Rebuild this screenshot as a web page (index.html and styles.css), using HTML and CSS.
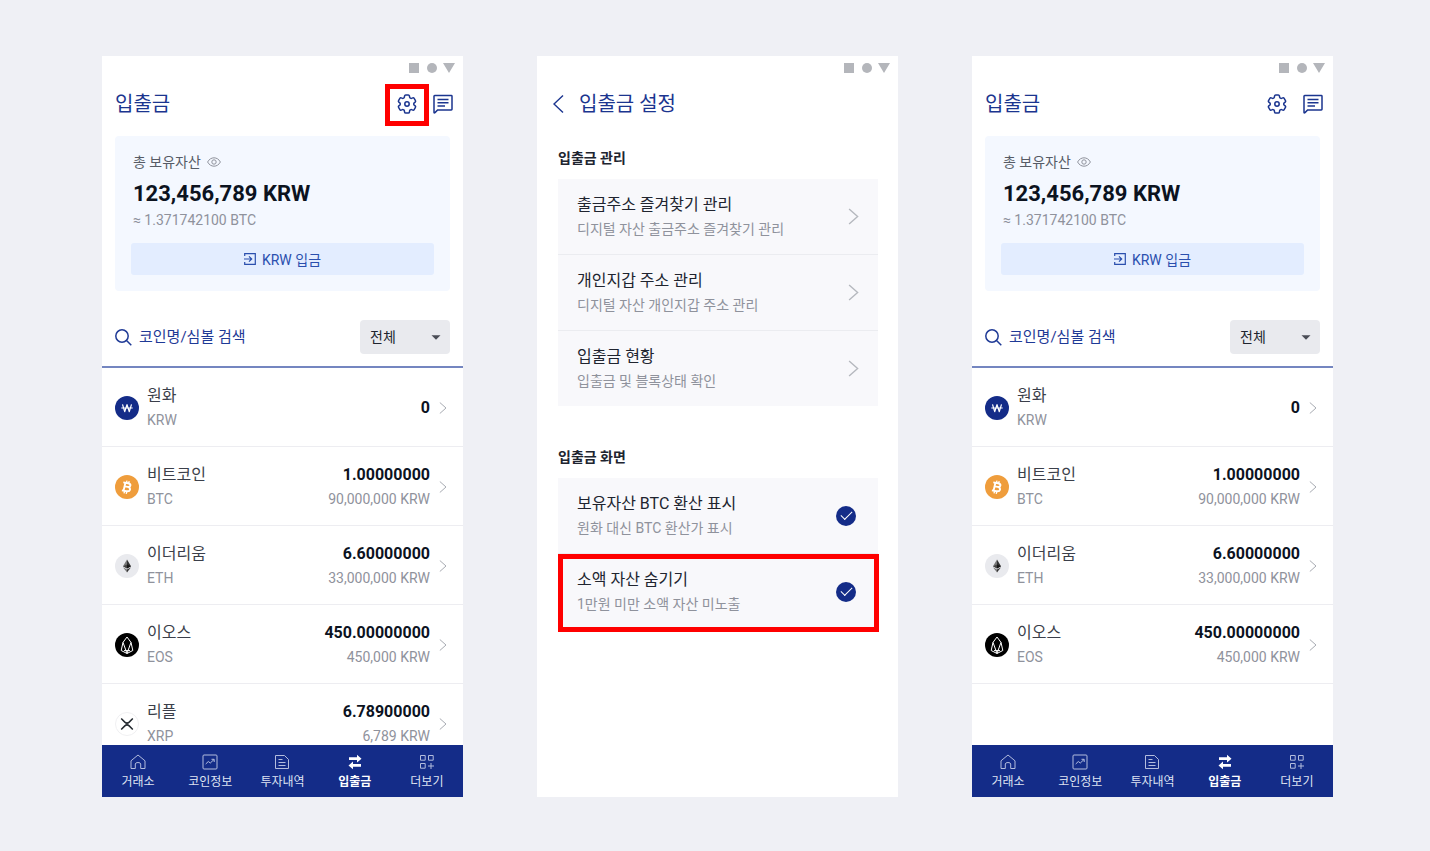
FILE: index.html
```html
<!DOCTYPE html>
<html lang="ko">
<head>
<meta charset="utf-8">
<meta name="viewport" content="width=device-width, initial-scale=1">
<title>입출금</title>
<link rel="stylesheet" href="styles.css">
</head>
<body>
<svg class="sprite" aria-hidden="true">
  <symbol id="status" viewBox="0 0 46 10"><path d="M0 0h10v10H0zM34 0h12l-6 10z"/><circle cx="23" cy="5" r="5"/></symbol>
  <symbol id="gear" viewBox="2 2 20 20"><path d="M9.594 3.94c.09-.542.56-.94 1.11-.94h2.593c.55 0 1.02.398 1.11.94l.213 1.281c.063.374.313.686.645.87.074.04.147.083.22.127.325.196.72.257 1.075.124l1.217-.456a1.125 1.125 0 0 1 1.37.49l1.296 2.247a1.125 1.125 0 0 1-.26 1.431l-1.003.827c-.293.241-.438.613-.43.992a7.723 7.723 0 0 1 0 .255c-.008.378.137.75.43.991l1.004.827c.424.35.534.955.26 1.43l-1.298 2.247a1.125 1.125 0 0 1-1.369.491l-1.217-.456c-.355-.133-.75-.072-1.076.124a6.47 6.47 0 0 1-.22.128c-.331.183-.581.495-.644.869l-.213 1.281c-.09.543-.56.94-1.11.94h-2.594c-.55 0-1.019-.398-1.11-.94l-.213-1.281c-.062-.374-.312-.686-.644-.87a6.52 6.52 0 0 1-.22-.127c-.325-.196-.72-.257-1.076-.124l-1.217.456a1.125 1.125 0 0 1-1.369-.49l-1.297-2.247a1.125 1.125 0 0 1 .26-1.431l1.004-.827c.292-.24.437-.613.43-.991a6.932 6.932 0 0 1 0-.255c.007-.38-.138-.751-.43-.992l-1.004-.827a1.125 1.125 0 0 1-.26-1.43l1.297-2.247a1.125 1.125 0 0 1 1.37-.491l1.216.456c.356.133.751.072 1.076-.124.072-.044.146-.086.22-.128.332-.183.582-.495.644-.869l.214-1.28Z"/><circle cx="12" cy="12" r="2.2"/></symbol>
  <symbol id="chat" viewBox="0 0 20 20"><path d="M1 18.5V2.2Q1 1.5 1.7 1.5h16.6q.7 0 .7.7v13q0 .7-.7.7H4.6L2 18.6q-1 .7-1-.1z"/><path d="M4.5 5.5h11M4.5 8.7h11M4.5 11.9h7.5"/></symbol>
  <symbol id="eye" viewBox="0 0 14 10"><path d="M.6 5C3.500-.6 10.500-.6 13.400 5 10.500 10.600 3.500 10.600.6 5z"/><circle cx="7" cy="5" r="2.200"/></symbol>
  <symbol id="deposit" viewBox="0 0 12 12"><path d="M.7 3V.7h10.600v10.600H.7V9M0 6h7.500M5 3.300 7.700 6 5 8.700"/></symbol>
  <symbol id="search" viewBox="0 0 17 17"><circle cx="7" cy="7" r="6.200"/><path d="m11.500 11.500 4.800 4.800"/></symbol>
  <symbol id="caret" viewBox="0 0 10 5"><path d="M.5.300h9L5 4.800z"/></symbol>
  <symbol id="next" viewBox="0 0 8 12"><path d="m.8.5 6.200 5.500L.8 11.500"/></symbol>
  <symbol id="back" viewBox="0 0 11 18"><path d="M10 .6 1 9l9 8.400"/></symbol>
  <symbol id="krw" viewBox="0 0 24 24"><circle cx="12" cy="12" r="12" fill="#142c88"/><path fill="none" stroke="#fff" stroke-width="1.200" stroke-linejoin="round" d="m7.500 8.300 2.200 7.400L12 8.600l2.300 7.100 2.200-7.400M6.300 12h11.400"/></symbol>
  <symbol id="btc" viewBox="0 0 24 24"><circle cx="12" cy="12" r="12" fill="#ef9d3c"/><g fill="none" stroke="#fff" stroke-width="1.900" stroke-linejoin="round"><path d="m10.400 7.800-1.900 8.100M8.300 7.400l4.800.8c3.600.8 2.700 4.200-.5 3.700l-2.700-.5M12.600 11.900c4 .9 2.800 5-1.100 4.300l-4.600-.8"/><path stroke-width="1.300" d="m11.400 8 .6-2.400M13.600 8.500l.6-2.400M9 18.400l.6-2.300M11.200 18.900l.6-2.400"/></g></symbol>
  <symbol id="eth" viewBox="0 0 24 24"><circle cx="12" cy="12" r="12" fill="#e9eaee"/><path d="M12 5.500 8 12.200l4 2.300z" fill="#777"/><path d="m12 5.500 4 6.700-4 2.300z" fill="#333"/><path d="m8 12.200 4-1.800v4.100z" fill="#444"/><path d="m16 12.200-4-1.800v4.100z" fill="#161616"/><path d="m8 13.200 4 5.400v-3z" fill="#777"/><path d="m16 13.200-4 5.400v-3z" fill="#333"/></symbol>
  <symbol id="eos" viewBox="0 0 24 24"><circle cx="12" cy="12" r="12"/><path fill="none" stroke="#fff" stroke-linejoin="round" d="M12 4 8 9.400 6.200 17.500 12 20.500l5.800-3L16 9.400zM8 9.400l4 11 4-11M9 17.600h6"/></symbol>
  <symbol id="xrp" viewBox="0 0 24 24"><circle cx="12" cy="12" r="11.500" fill="#fff" stroke="#f0f0f2"/><path fill="none" stroke="#23292f" stroke-width="1.500" d="m6.200 6.500 3.600 3.600q2.200 2 4.400 0l3.600-3.600M6.200 17.500l3.600-3.600q2.200-2 4.400 0l3.600 3.600"/></symbol>
  <symbol id="home" viewBox="0 0 16 16"><path d="M1 6.800 8 1l7 5.800v7.700h-4.300V10Q10.500 8.500 8 8.500T5.300 10v4.500H1z"/></symbol>
  <symbol id="chart" viewBox="0 0 16 16"><rect x="1" y="1" width="14" height="14" rx="1"/><path d="m3.700 10 2.600-2.500 2 1.500 3.700-3.500M9.500 5.300h2.700V8"/></symbol>
  <symbol id="doc" viewBox="0 0 16 16"><path d="M1.500 1.500h9l4 4v9h-13zM4.500 5.500h4M4.500 8.500h7M4.500 11.500h7"/></symbol>
  <symbol id="swap" viewBox="0 0 16 16"><path d="M2 3.200h8V.8L14.500 4.700 10 8.600V6.100H2zM14 10H6V7.600L1.500 11.500 6 15.200v-2.400h8z"/></symbol>
  <symbol id="more" viewBox="0 0 16 16"><path d="M1.500 1.500h4.700v4.700H1.500zM9.500 1.500h4.700v4.700H9.500zM1.500 9.500h4.700v4.700H1.500zM9 12h6M12 9v6"/></symbol>
</svg>

<main class="board">
  <section class="phone">
    <svg class="status"><use href="#status"/></svg>
    <header class="head">
      <h1 class="title">입출금</h1>
      <button class="tool tool-marked" aria-label="설정"><svg class="line"><use href="#gear"/></svg></button>
      <button class="tool" aria-label="메시지"><svg class="line"><use href="#chat"/></svg></button>
    </header>
    <div class="asset">
      <p class="asset-label">총 보유자산 <svg class="line eye"><use href="#eye"/></svg></p>
      <p class="asset-total">123,456,789 KRW</p>
      <p class="asset-btc">≈ 1.371742100 BTC</p>
      <button class="deposit"><svg class="line"><use href="#deposit"/></svg>KRW 입금</button>
    </div>
    <div class="filter">
      <label class="search"><svg class="line"><use href="#search"/></svg><input type="search" placeholder="코인명/심볼 검색" aria-label="코인명/심볼 검색"></label>
      <label class="pick"><select aria-label="자산 구분"><option>전체</option></select><svg><use href="#caret"/></svg></label>
    </div>
    <div class="coins">
      <a class="coin" href="#coin-krw"><svg class="mark"><use href="#krw"/></svg><span class="name">원화<small>KRW</small></span><span class="amount">0</span><svg class="line next"><use href="#next"/></svg></a>
      <a class="coin" href="#coin-btc"><svg class="mark"><use href="#btc"/></svg><span class="name">비트코인<small>BTC</small></span><span class="amount">1.00000000<small>90,000,000 KRW</small></span><svg class="line next"><use href="#next"/></svg></a>
      <a class="coin" href="#coin-eth"><svg class="mark"><use href="#eth"/></svg><span class="name">이더리움<small>ETH</small></span><span class="amount">6.60000000<small>33,000,000 KRW</small></span><svg class="line next"><use href="#next"/></svg></a>
      <a class="coin" href="#coin-eos"><svg class="mark"><use href="#eos"/></svg><span class="name">이오스<small>EOS</small></span><span class="amount">450.00000000<small>450,000 KRW</small></span><svg class="line next"><use href="#next"/></svg></a>
      <a class="coin" href="#coin-xrp"><svg class="mark"><use href="#xrp"/></svg><span class="name">리플<small>XRP</small></span><span class="amount">6.78900000<small>6,789 KRW</small></span><svg class="line next"><use href="#next"/></svg></a>
    </div>
    <nav class="tabs">
      <a href="#tab-home"><svg class="line"><use href="#home"/></svg>거래소</a>
      <a href="#tab-chart"><svg class="line"><use href="#chart"/></svg>코인정보</a>
      <a href="#tab-doc"><svg class="line"><use href="#doc"/></svg>투자내역</a>
      <a href="#tab-swap" class="active"><svg><use href="#swap"/></svg>입출금</a>
      <a href="#tab-more"><svg class="line"><use href="#more"/></svg>더보기</a>
    </nav>
  </section>

  <section class="phone">
    <svg class="status"><use href="#status"/></svg>
    <header class="head head-back">
      <button class="back" aria-label="뒤로"><svg class="line"><use href="#back"/></svg></button>
      <h1 class="title">입출금 설정</h1>
    </header>
    <div class="group">
      <h2 class="group-title">입출금 관리</h2>
      <a class="item" href="#favorites"><span class="item-text">출금주소 즐겨찾기 관리<small>디지털 자산 출금주소 즐겨찾기 관리</small></span><svg class="line go"><use href="#next"/></svg></a>
      <a class="item" href="#wallets"><span class="item-text">개인지갑 주소 관리<small>디지털 자산 개인지갑 주소 관리</small></span><svg class="line go"><use href="#next"/></svg></a>
      <a class="item" href="#state"><span class="item-text">입출금 현황<small>입출금 및 블록상태 확인</small></span><svg class="line go"><use href="#next"/></svg></a>
    </div>
    <div class="group">
      <h2 class="group-title">입출금 화면</h2>
      <label class="item"><span class="item-text">보유자산 BTC 환산 표시<small>원화 대신 BTC 환산가 표시</small></span><input class="check" type="checkbox" checked></label>
      <label class="item item-marked"><span class="item-text">소액 자산 숨기기<small>1만원 미만 소액 자산 미노출</small></span><input class="check" type="checkbox" checked></label>
    </div>
  </section>

  <section class="phone">
    <svg class="status"><use href="#status"/></svg>
    <header class="head">
      <h1 class="title">입출금</h1>
      <button class="tool" aria-label="설정"><svg class="line"><use href="#gear"/></svg></button>
      <button class="tool" aria-label="메시지"><svg class="line"><use href="#chat"/></svg></button>
    </header>
    <div class="asset">
      <p class="asset-label">총 보유자산 <svg class="line eye"><use href="#eye"/></svg></p>
      <p class="asset-total">123,456,789 KRW</p>
      <p class="asset-btc">≈ 1.371742100 BTC</p>
      <button class="deposit"><svg class="line"><use href="#deposit"/></svg>KRW 입금</button>
    </div>
    <div class="filter">
      <label class="search"><svg class="line"><use href="#search"/></svg><input type="search" placeholder="코인명/심볼 검색" aria-label="코인명/심볼 검색"></label>
      <label class="pick"><select aria-label="자산 구분"><option>전체</option></select><svg><use href="#caret"/></svg></label>
    </div>
    <div class="coins">
      <a class="coin" href="#coin-krw"><svg class="mark"><use href="#krw"/></svg><span class="name">원화<small>KRW</small></span><span class="amount">0</span><svg class="line next"><use href="#next"/></svg></a>
      <a class="coin" href="#coin-btc"><svg class="mark"><use href="#btc"/></svg><span class="name">비트코인<small>BTC</small></span><span class="amount">1.00000000<small>90,000,000 KRW</small></span><svg class="line next"><use href="#next"/></svg></a>
      <a class="coin" href="#coin-eth"><svg class="mark"><use href="#eth"/></svg><span class="name">이더리움<small>ETH</small></span><span class="amount">6.60000000<small>33,000,000 KRW</small></span><svg class="line next"><use href="#next"/></svg></a>
      <a class="coin" href="#coin-eos"><svg class="mark"><use href="#eos"/></svg><span class="name">이오스<small>EOS</small></span><span class="amount">450.00000000<small>450,000 KRW</small></span><svg class="line next"><use href="#next"/></svg></a>
    </div>
    <nav class="tabs">
      <a href="#tab-home"><svg class="line"><use href="#home"/></svg>거래소</a>
      <a href="#tab-chart"><svg class="line"><use href="#chart"/></svg>코인정보</a>
      <a href="#tab-doc"><svg class="line"><use href="#doc"/></svg>투자내역</a>
      <a href="#tab-swap" class="active"><svg><use href="#swap"/></svg>입출금</a>
      <a href="#tab-more"><svg class="line"><use href="#more"/></svg>더보기</a>
    </nav>
  </section>
</main>
</body>
</html>
```

FILE: styles.css
```css
* { box-sizing: border-box; }

body {
  margin: 0;
  background: #eff0f5;
  color: #20242f;
  font-family: Roboto, "Noto Sans CJK KR", sans-serif;
}

h1, h2, p { margin: 0; }
a { color: inherit; text-decoration: none; }
button, input, select { font: inherit; color: inherit; border: 0; padding: 0; background: none; }
svg { display: block; flex: none; fill: currentColor; }
small { display: block; font-size: 14px; font-weight: 400; color: #8f929c; }

.sprite { position: absolute; width: 0; height: 0; }
.line { fill: none; stroke: currentColor; }

.board {
  display: grid;
  grid-template-columns: repeat(3, minmax(0, 1fr));
  grid-template-rows: minmax(0, 1fr);
  gap: 74px;
  height: 100vh;
  padding: 56px 97px 54px 102px;
}

.phone {
  display: flex;
  flex-direction: column;
  background: #fff;
  overflow: hidden;
}

.status {
  width: 46px;
  height: 10px;
  margin: 7px 8px 7px auto;
  color: #b4b6bb;
}

.head {
  display: flex;
  align-items: center;
  gap: 16px;
  height: 48px;
  flex: none;
  padding: 0 10px 0 13px;
  color: #1b358f;
}
.head-back { padding-left: 16px; gap: 15px; }
.title { flex: 1; font-size: 20px; line-height: 28px; font-weight: 400; }
.tool { position: relative; width: 20px; height: 20px; }
.tool svg { width: 20px; height: 20px; stroke-width: 1.5; }
.tool-marked::after {
  content: "";
  position: absolute;
  inset: -10px -12px -12px;
  border: 5px solid #f00;
}
.back svg { width: 11px; height: 18px; stroke-width: 1.4; }

.asset {
  flex: none;
  margin: 8px 13px 0;
  padding: 16px;
  border-radius: 4px;
  background: #f4f8ff;
}
.asset p { padding: 0 2px; }
.asset-label {
  display: flex;
  align-items: center;
  gap: 6px;
  font-size: 14px;
  line-height: 20px;
  color: #565b66;
}
.eye { width: 14px; height: 10px; color: #8f929c; }
.asset-total { margin-top: 6px; font-size: 22px; line-height: 32px; font-weight: 700; color: #0c131f; }
.asset-btc { font-size: 14px; line-height: 20px; color: #8f929c; }
.deposit {
  display: flex;
  align-items: center;
  justify-content: center;
  gap: 6px;
  width: 100%;
  height: 32px;
  margin-top: 13px;
  padding-bottom: 1px;
  border-radius: 3px;
  background: #e3edff;
  color: #2a4fae;
  font-size: 14px;
}
.deposit svg { width: 12px; height: 12px; stroke-width: 1.2; }

.filter {
  display: flex;
  align-items: center;
  flex: none;
  padding: 29px 13px 12px;
  border-bottom: 2px solid #7486c0;
}
.search { display: flex; align-items: center; gap: 7px; flex: 1; color: #1f3a96; }
.search svg { width: 17px; height: 17px; stroke-width: 1.5; }
.search input { flex: 1; min-width: 0; font-size: 15px; line-height: 24px; outline: 0; }
.search input::placeholder { color: #1f3a96; opacity: 1; }
.pick { position: relative; width: 90px; }
.pick select {
  appearance: none;
  width: 100%;
  height: 34px;
  padding: 0 10px;
  border-radius: 4px;
  background: #e9eaee;
  font-size: 14px;
}
.pick svg { position: absolute; right: 9px; top: 15px; width: 10px; height: 5px; color: #4a4d56; }

.coins { flex: 1 1 0; min-height: 0; overflow: hidden; }
.coin {
  display: flex;
  align-items: center;
  height: 79px;
  padding: 1px 16px 0 13px;
  border-bottom: 1px solid #ededf1;
  line-height: 25px;
}
.mark { width: 24px; height: 24px; margin-right: 8px; color: #000; }
.name { flex: 1; font-size: 16px; color: #3b3f4a; }
.amount { font-size: 16px; font-weight: 700; color: #0c131f; text-align: right; }
.next { width: 8px; height: 12px; margin-left: 9px; color: #a8abb2; }

.tabs {
  display: grid;
  grid-template-columns: repeat(5, 1fr);
  flex: none;
  height: 52px;
  background: #142c88;
  color: #dfe3f2;
  font-size: 12px;
  line-height: 18px;
}
.tabs a { display: flex; flex-direction: column; align-items: center; gap: 3px; padding-top: 9px; }
.tabs svg { width: 16px; height: 16px; }
.tabs .line { color: #b3bcdd; }
.tabs .active { color: #fff; font-weight: 700; }

.group { margin: 18px 20px 21px 21px; }
.group-title { margin-bottom: 9px; font-size: 14px; line-height: 24px; font-weight: 700; }
.item {
  position: relative;
  display: flex;
  align-items: center;
  height: 76px;
  padding: 0 19px;
  border-bottom: 1px solid #ebecf0;
  background: #f8f8fb;
  font-size: 16px;
  line-height: 25px;
}
.item:last-child { height: 75px; border-bottom: 0; }
.item-text { flex: 1; }
.go { width: 11px; height: 17px; color: #b5b8be; }
.check {
  appearance: none;
  display: grid;
  place-items: center;
  width: 20px;
  height: 20px;
  margin: 0 3px;
  border-radius: 50%;
  background: #142c88;
}
.check::before {
  content: "";
  width: 10px;
  height: 5px;
  margin-bottom: 3px;
  border: solid #fff;
  border-width: 0 0 1px 1px;
  transform: rotate(-45deg);
}
.item-marked::after {
  content: "";
  position: absolute;
  inset: 0 -1px -3px 0;
  border: 5px solid #f00;
}
```
